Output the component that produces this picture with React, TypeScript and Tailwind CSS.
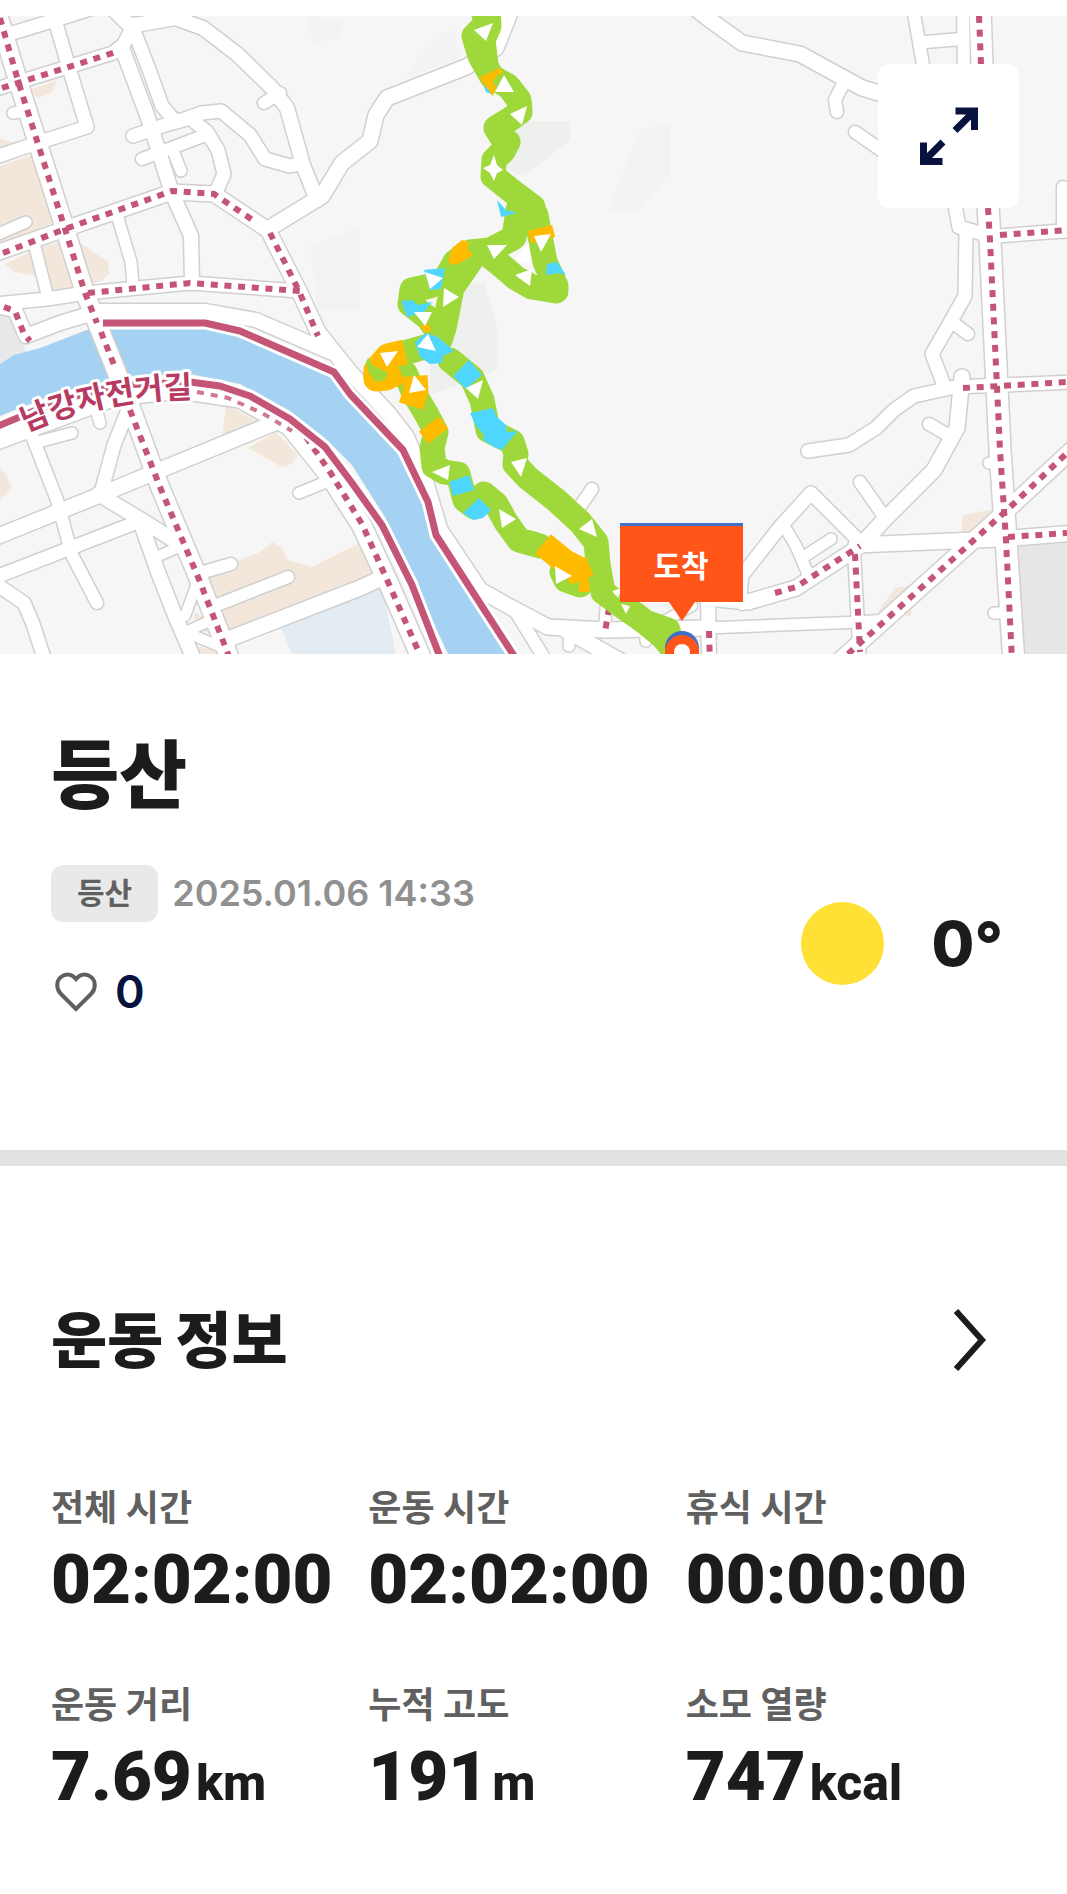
import { useState } from 'react';

interface Stat {
    label: string;
    value: string;
    unit?: string;
}

interface Road {
    d: string;
    w: number;
}

const STATS: Stat[] = [
    { label: '전체 시간', value: '02:02:00' },
    { label: '운동 시간', value: '02:02:00' },
    { label: '휴식 시간', value: '00:00:00' },
    { label: '운동 거리', value: '7.69', unit: 'km' },
    { label: '누적 고도', value: '191', unit: 'm' },
    { label: '소모 열량', value: '747', unit: 'kcal' },
];

const ROADS: Road[] = [
    // west side, north of the river
    { d: 'M-4 8L19 84L65 229L85 293L97 323L131 408L160 487L198 577L232 664', w: 18 },
    { d: 'M-4 89L113 53L124 44L134 24', w: 13 },
    { d: 'M-4 38L55 20L100 6', w: 13 },
    { d: 'M55 20L69 68L87 127L40 142L-4 157', w: 13 },
    { d: 'M112 8L130 26L175 18L203 28L237 54L272 88L287 108L303 165L317 200', w: 14 },
    { d: 'M122 48L147 115L160 155L172 193L191 236L192 283', w: 14 },
    { d: 'M133 28L150 72L162 106L176 122L202 113L221 111L250 135L265 159L290 166L300 164', w: 13 },
    { d: 'M133 136L165 125L190 118L207 132L218 150L224 174L216 192', w: 13 },
    { d: 'M142 159L166 150L203 136', w: 12 },
    { d: 'M172 148L181 171', w: 11 },
    { d: 'M-4 253L65 229L172 192L214 194L268 230L299 291L318 332L350 372L388 413L406 436L425 480L440 530L480 590L512 608L548 627L606 630L706 628', w: 15 },
    { d: 'M268 229L322 196L342 163L370 141L376 115L387 98L466 67L480 58L496 48L512 8', w: 15 },
    { d: 'M-4 304L47 299L86 293L190 283L300 291', w: 13 },
    { d: 'M117 215L131 262L133 285', w: 11 },
    { d: 'M34 243L48 298', w: 11 },
    { d: 'M-4 235L26 222', w: 11 },
    { d: 'M13 113L26 111', w: 11 },
    { d: 'M264 103L280 93', w: 12 },
    { d: 'M-4 306L15 310L26 336L60 323L100 311L205 311L256 320L330 352', w: 14 },
    // south bank
    { d: 'M-4 440L50 420L115 396L180 389L240 398L290 426L330 476L362 526L388 582L424 664', w: 19 },
    { d: 'M-4 537L100 495L155 472L272 424L282 418', w: 15 },
    { d: 'M-4 577L140 521', w: 13 },
    { d: 'M98 494L140 519L178 543', w: 14 },
    { d: 'M-4 584L24 603L33 624L46 664', w: 13 },
    { d: 'M32 436L57 500L72 555L97 603', w: 12 },
    { d: 'M38 442L72 433', w: 11 },
    { d: 'M95 405L100 423', w: 11 },
    { d: 'M128 410L114 445L101 493', w: 13 },
    { d: 'M141 524L158 572L176 618L196 664', w: 14 },
    { d: 'M154 558L181 546', w: 10 },
    { d: 'M199 578L185 616', w: 10 },
    { d: 'M200 573L231 564', w: 12 },
    { d: 'M190 630L214 619M190 634L228 650', w: 10 },
    { d: 'M212 607L288 577', w: 12 },
    { d: 'M226 640L360 588L384 577', w: 15 },
    { d: 'M299 493L326 482', w: 11 },
    // around the finish
    { d: 'M562 628L626 664', w: 15 },
    { d: 'M512 606L548 664', w: 12 },
    { d: 'M570 632L569 646', w: 11 },
    { d: 'M607 600L604 632', w: 11 },
    { d: 'M572 518L592 489', w: 12 },
    { d: 'M646 632L646 641', w: 11 },
    { d: 'M662 622L692 606', w: 10 },
    { d: 'M708 590L709 664', w: 14 },
    // east side
    { d: 'M690 4L710 20L742 43L800 54L862 88L900 99', w: 15 },
    { d: 'M842 86L835 100L837 112', w: 12 },
    { d: 'M855 132L904 166', w: 12 },
    { d: 'M913 8L925 76', w: 12 },
    { d: 'M925 42L962 39', w: 12 },
    { d: 'M963 8L964 76', w: 12 },
    { d: 'M954 200L959 227L990 236', w: 13 },
    { d: 'M980 8L985 150L990 240L1000 450L1006 540L1014 664', w: 21 },
    { d: 'M985 237L1075 230', w: 13 },
    { d: 'M1063 187L1063 232', w: 12 },
    { d: 'M966 234L965 296L947 328L932 354L945 388', w: 13 },
    { d: 'M952 322L968 334', w: 12 },
    { d: 'M808 451L849 445L876 428L894 410L914 396L955 387L1075 382', w: 13 },
    { d: 'M962 377L957 428L934 470L885 519L860 546', w: 15 },
    { d: 'M929 424L948 435', w: 12 },
    { d: 'M860 482L883 515', w: 12 },
    { d: 'M740 578L780 527L811 493L862 544', w: 13 },
    { d: 'M784 526L796 546L808 574', w: 11 },
    { d: 'M802 558L831 539', w: 11 },
    { d: 'M706 598L748 602L796 588L856 549', w: 15 },
    { d: 'M742 606L744 578', w: 8 },
    { d: 'M856 545L1000 539L1075 533', w: 15 },
    { d: 'M706 628L860 622L884 620', w: 11 },
    { d: 'M836 664L1006 511L1075 447', w: 16 },
    { d: 'M854 550L860 664', w: 12 },
    { d: 'M989 463L1002 463M994 613L1010 613', w: 11 },
];

const BIKE_DOTS = [
    'M0 18L19 84L65 229L85 293L97 323',
    'M101 332L116 370',
    'M130 410L160 487L198 577L232 664',
    'M2 88L116 52',
    'M3 253L65 229L172 191L214 194L254 221',
    'M270 233L299 291L318 336',
    'M88 293L190 283L300 291',
    'M4 307L15 311L24 334L30 341',
    'M306 437L330 472L362 524L388 582L424 664',
    'M609 608L605 632',
    'M709 631L710 664',
    'M979 16L981 64',
    'M988 208L990 240L1000 450L1006 540L1012 660',
    'M1000 235L1067 230',
    'M963 388L1000 386L1067 382',
    'M775 593L796 587L860 546',
    'M855 554L860 652',
    'M848 654L1006 511L1067 453',
    'M1008 537L1067 533',
];

const GREEN_TRACK = [
    'M482 4L486 24L474 36L480 56L492 77L508 86L519 100L520 112L509 120L496 128L505 142L504 150L494 160L493 176L513 192L533 207L534 212L520 220L513 238L490 250L470 252L455 262L446 278L430 286L412 290L410 304L428 318L440 335',
    'M488 10L489 26L483 40L486 65',
    'M508 142L502 152M518 210L514 237',
    'M536 215L540 236L545 262L556 286L556 291L532 287L516 278L502 266L492 258',
    'M470 262L452 288L444 328L440 340',
    'M432 345L404 353L386 364L376 376L405 373L415 395L427 415L436 432L432 448L434 466L444 472L458 474L465 500L474 507L484 494L496 504L506 522L519 540L540 546',
    'M450 360L472 378L482 400L488 430L512 442L516 454L515 464L528 478L556 500L580 522L596 542L598 564L603 592L622 606L645 622L668 630L670 640',
    'M562 572L566 580L580 585',
    'M635 614L662 636L672 648',
];

const ORANGE_TRACK = [
    'M540 228L543 240',
    'M405 352L388 356L376 370L376 379L386 378L400 371',
    'M415 376L416 390L411 406',
    'M429 424L438 436',
    'M543 544L565 562L577 568L582 580',
];

const ARROWS = [
    '474,30 493,23 486,41',
    '495,92 504,75 514,92',
    '510,114 527,106 522,125',
    '483,168 490,165 494,155 497,165 503,170 497,173 494,181 490,173',
    '534,236 551,234 541,252',
    '487,245 507,245 494,259',
    '515,258 529,243 530,264 521,263',
    '515,275 532,269 530,286',
    '425,272 443,278 430,289',
    '444,288 459,297 443,307',
    '414,312 432,312 425,326',
    '428,334 417,347 436,351',
    '380,353 398,351 387,367',
    '414,375 409,393 426,390',
    '466,388 483,380 478,399',
    '511,462 527,458 521,477',
    '432,472 450,465 448,480',
    '499,509 516,519 502,528',
    '579,529 592,519 597,537',
    '555,566 572,576 556,584',
    '612,591 622,588 618,598',
    '621,604 630,606 626,614',
];

function RouteMap() {
    return (
        <svg viewBox="0 16 1067 638" className="block w-full" role="img" aria-label="등산 경로 지도">
            <rect x="0" y="16" width="1067" height="638" fill="#f6f6f6" />

            {/* Green areas */}
            <g fill="#edf0ed">
                <path d="M520 121H570V140L524 176L505 170Z" />
                <path d="M640 130L670 122V175L636 213H608L622 175Z" opacity="0.5" />
                <path d="M460 285L484 282L497 325V370L430 395V330Z" />
                <path d="M305 17L345 20L338 38L315 43Z" opacity="0.5" />
                <path d="M440 35L455 30L460 60L400 80Z" opacity="0.4" />
                <path d="M310 245L360 228V310H318Z" opacity="0.4" />
            </g>

            {/* Built-up blocks */}
            <g fill="#f3e7db">
                <path d="M0 166L35 154L56 222L0 242Z" />
                <path d="M30 90L57 80L52 92L38 98Z" />
                <path d="M0 139L17 143L0 150Z" />
                <path d="M5 264L30 252L36 276L14 272Z" />
                <path d="M40 248L64 240L75 288L52 292Z" />
                <path d="M76 240L108 262L109 274L100 282L84 284Z" />
                <path d="M0 468L6 474L12 488L0 500Z" />
                <path d="M226 405L262 423L222 438Z" />
                <path d="M248 448L276 432L298 455L292 464L282 467Z" />
                <path d="M208 578L235 562L260 552L272 542L282 548L288 560L312 567L360 543L378 572L230 632Z" />
                <path d="M195 612L204 618L194 620ZM203 630L212 628L212 636ZM196 646L228 654H196Z" />
                <path d="M963 515L994 509L976 532H961Z" />
                <path d="M878 612L895 588L912 585L911 616Z" />
            </g>
            <path d="M280 625L382 588L396 654H292Z" fill="#e3ebf3" />
            <path d="M1016 546L1067 543V654H1022Z" fill="#e6e6e6" />
            <path d="M0 312L14 314L26 352L0 364Z" fill="#e9e9e9" />

            {/* River */}
            <path
                d="M0 364L14 355L40 348L100 325L205 325L240 334L335 376L350 398L400 455L424 505L432 535L510 654H448L410 572L385 517L352 465L325 438L290 411L240 384L190 374L130 376L60 392L0 416Z"
                fill="#a5d1f3"
            />

            <g fill="none" stroke="#d0d0d0" strokeLinecap="round" strokeLinejoin="round">
                {ROADS.map((road) => (
                    <path key={road.d} d={road.d} strokeWidth={road.w + 3} />
                ))}
            </g>
            <g fill="none" stroke="#ffffff" strokeLinecap="round" strokeLinejoin="round">
                {ROADS.map((road) => (
                    <path key={road.d} d={road.d} strokeWidth={road.w} />
                ))}
            </g>

            {/* Bicycle roads */}
            <g fill="none" stroke="#c45576" strokeWidth="6" strokeDasharray="7 6.7">
                {BIKE_DOTS.map((d) => (
                    <path key={d} d={d} />
                ))}
            </g>
            <g fill="none" strokeLinejoin="round">
                <g stroke="#ffffff" strokeWidth="13">
                    <path d="M103 323H205L240 331L334 372L350 394L403 450L428 502L436 535L518 662" />
                    <path d="M-4 427L60 400L120 385L190 382L220 386L250 396L290 419L325 447L352 483L382 525L412 585L442 662" />
                </g>
                <g stroke="#c45576" strokeWidth="7">
                    <path d="M103 323H205L240 331L334 372L350 394L403 450L428 502L436 535L518 662" />
                    <path d="M-4 427L60 400L120 385L190 382L220 386L250 396L290 419L325 447L352 483L382 525L412 585L442 662" />
                </g>
            </g>
            <path d="M197 392L228 398L262 413L292 431" fill="none" stroke="#cf7892" strokeWidth="4" strokeDasharray="7 7" />

            <path id="river-road" d="M26 432Q104 397 204 398" fill="none" />
            <text
                className="font-['Noto_Sans_CJK_KR',sans-serif] text-[31px] font-bold"
                fill="#b83a63"
                stroke="#ffffff"
                strokeWidth="6"
                strokeLinejoin="round"
                paintOrder="stroke"
            >
                <textPath href="#river-road">남강자전거길</textPath>
            </text>

            {/* Recorded track, coloured by pace */}
            <g fill="none" strokeWidth="25" strokeLinejoin="round">
                <g stroke="#9fd83a" strokeLinecap="round">
                    {GREEN_TRACK.map((d) => (
                        <path key={d} d={d} />
                    ))}
                </g>
                <g stroke="#ffbb00">
                    {ORANGE_TRACK.map((d) => (
                        <path key={d} d={d} />
                    ))}
                </g>
            </g>
            <g fill="#ffbb00">
                <path d="M480 77L500 68L503 72L497 76L492 82L496 86L493 96L486 90Z" />
                <path d="M448 262L452 248L462 240L469 242L468 249L473 255L460 263L452 265Z" />
                <path d="M420 326L428 324L432 330L425 333Z" />
                <path d="M580 562L586 556L590 592H579Z" />
            </g>
            <g fill="#4fd6ff">
                <path d="M483 84L492 94L486 92Z" />
                <path d="M497 200L506 210L517 213L501 217Z" />
                <path d="M547 264L557 262L566 275L560 273L546 275Z" />
                <path d="M424 270L445 268L441 289L430 290Z" />
                <path d="M401 301L412 300L418 305L432 302L424 312L407 317Z" />
                <path d="M415 342L426 333L438 337L454 351L443 356L442 363L430 364L420 357Z" />
                <path d="M453 376L469 360L482 375L466 389Z" />
                <path d="M470 413L493 408L497 417L506 425L507 432L518 431L510 440L502 450L494 447L483 440L484 435L476 426Z" />
                <path d="M449 482L469 475L474 490L453 496Z" />
                <path d="M463 513L479 498L491 510L483 518L473 520Z" />
            </g>
            <g fill="#9fd83a">
                <path d="M368 357L372 365L388 373L385 380L376 382L369 373L366 364Z" />
            </g>
            <g fill="#ffffff">
                {ARROWS.map((points) => (
                    <polygon key={points} points={points} />
                ))}
            </g>

            {/* Finish marker */}
            <circle cx="682" cy="648" r="17" fill="#3b6fc9" />
            <circle cx="682" cy="652" r="17" fill="#ff5519" />
            <circle cx="682" cy="652" r="8" fill="#ffffff" />
            <rect x="620" y="523" width="123" height="6" fill="#3f72c8" />
            <path d="M620 526H743V602H695L682 621L669 602H620Z" fill="#ff5519" />
            <text
                x="681"
                y="577"
                textAnchor="middle"
                fill="#ffffff"
                className="font-['Noto_Sans_CJK_KR',sans-serif] text-[30px] font-bold"
            >
                도착
            </text>
        </svg>
    );
}

export default function App() {
    const [liked, setLiked] = useState(false);

    return (
        <main className="min-h-screen bg-white pt-4 font-['Inter','Noto_Sans_CJK_KR',sans-serif] text-[#1c1c1c]">
            <section className="relative">
                <RouteMap />
                <button
                    type="button"
                    aria-label="지도 확대"
                    className="absolute top-12 right-12 flex h-36 w-[141px] items-center justify-center rounded-xl bg-white"
                >
                    <svg width="60" height="60" viewBox="0 0 60 60" fill="none" stroke="#07123f" strokeWidth="7">
                        <path d="M36.5 5H55.5V24M55.5 5L36 24.5" />
                        <path d="M23.500 55.500H4.500V36.500M4.500 55.500L24 36" />
                    </svg>
                </button>
            </section>

            <section className="border-b-16 border-[#e2e2e2] pt-[81px] pr-16 pb-32 pl-[51px]">
                <h1 className="text-[74px] leading-[80px] font-black">등산</h1>
                <div className="mt-[50px] flex items-center justify-between">
                    <div>
                        <div className="flex items-center gap-[14px]">
                            <span className="rounded-xl bg-[#e9e9e9] px-[26px] text-[30px] leading-[57px] font-bold text-[#606060]">
                                등산
                            </span>
                            <time dateTime="2025-01-06T14:33" className="text-[36px] leading-[57px] font-semibold text-[#909090]">
                                2025.01.06 14:33
                            </time>
                        </div>
                        <button
                            type="button"
                            aria-label="좋아요"
                            aria-pressed={liked}
                            onClick={() => setLiked(!liked)}
                            className="mt-10 flex h-[60px] items-center gap-[14px] text-[45px] font-semibold text-[#07123f]"
                        >
                            <svg width="50" height="50" viewBox="0 0 50 50" fill={liked ? '#606060' : 'none'} stroke="#606060" strokeWidth="4">
                                <path d="M25 42L10 27C5 22 5 14 10 10C15 6 21 7 25 12C29 7 35 6 40 10C45 14 45 22 40 27Z" />
                            </svg>
                            <span>{liked ? 1 : 0}</span>
                        </button>
                    </div>
                    <div className="flex items-center gap-12">
                        <span className="size-[83px] rounded-full bg-[#ffe135]" />
                        <span className="text-[62px] leading-[80px] font-extrabold">0°</span>
                    </div>
                </div>
            </section>

            <section className="pt-[139px] pr-16 pb-20 pl-[51px]">
                <div className="flex items-center justify-between">
                    <h2 className="text-[61px] leading-[72px] font-black">운동 정보</h2>
                    <button type="button" aria-label="운동 정보 더보기" className="pr-4">
                        <svg width="34" height="66" viewBox="0 0 34 66" fill="none" stroke="#1c1c1c" strokeWidth="6">
                            <path d="M3 3L29 32L3 61" />
                        </svg>
                    </button>
                </div>
                <dl className="mt-[107px] grid grid-cols-3 gap-y-[65px]">
                    {STATS.map((stat) => (
                        <div key={stat.label} className="whitespace-nowrap">
                            <dt className="text-[36px] leading-[48px] font-bold text-[#606060]">{stat.label}</dt>
                            <dd className="mt-3 flex items-baseline gap-1 font-['Roboto',sans-serif] text-[69px] leading-[72px] font-black">
                                {stat.value}
                                {stat.unit && <span className="text-[50px] font-extrabold">{stat.unit}</span>}
                            </dd>
                        </div>
                    ))}
                </dl>
            </section>
        </main>
    );
}
